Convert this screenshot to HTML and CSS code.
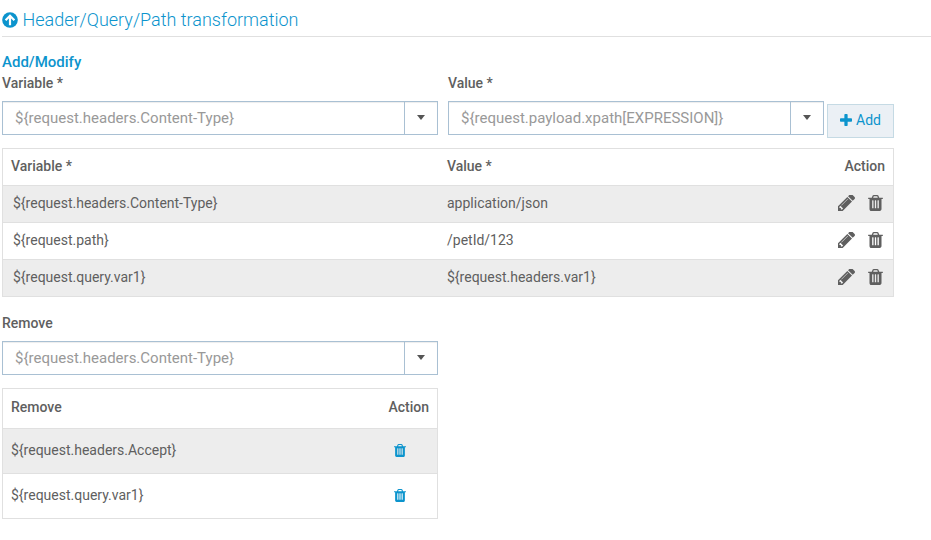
FILE: index.html
```html
<!DOCTYPE html>
<html lang="en">
<head>
<meta charset="utf-8">
<title>Header/Query/Path transformation</title>
<link rel="stylesheet" href="styles.css">
</head>
<body>
<svg class="defs" aria-hidden="true">
  <symbol id="pencil" viewBox="128 256 1515 1408"><path d="M491 1536l91-91-235-235-91 91v107h128v128h107zm523-928q0-22-22-22-10 0-17 7l-542 542q-7 7-7 17 0 22 22 22 10 0 17-7l542-542q7-7 7-17zm-54-192l416 416-832 832h-416v-416zm683 96q0 53-37 90l-166 166-416-416 166-165q36-38 90-38 53 0 91 38l235 234q37 39 37 91z"/></symbol>
  <symbol id="trash" viewBox="192 128 1408 1536"><path d="M704 1376v-704q0-14-9-23t-23-9h-64q-14 0-23 9t-9 23v704q0 14 9 23t23 9h64q14 0 23-9t9-23zm256 0v-704q0-14-9-23t-23-9h-64q-14 0-23 9t-9 23v704q0 14 9 23t23 9h64q14 0 23-9t9-23zm256 0v-704q0-14-9-23t-23-9h-64q-14 0-23 9t-9 23v704q0 14 9 23t23 9h64q14 0 23-9t9-23zm-544-992h448l-48-117q-7-9-17-11h-317q-10 2-17 11zm928 32v64q0 14-9 23t-23 9h-96v948q0 83-47 143.5t-113 60.5h-832q-66 0-113-58.5t-47-141.5v-952h-96q-14 0-23-9t-9-23v-64q0-14 9-23t23-9h309l70-167q15-37 54-63t79-26h320q40 0 79 26t54 63l70 167h309q14 0 23 9t9 23z"/></symbol>
</svg>
<h1 class="title">
  <svg class="title-icon" viewBox="0 0 16 16"><circle cx="8" cy="8" r="7.8"/><path class="arrow" d="M8 13.2V4M3.6 8.2L8 3.8l4.4 4.4"/></svg>
  <span>Header/Query/Path transformation</span>
</h1>
<h2 class="subtitle">Add/Modify</h2>
<div class="form-row">
  <div class="field field-variable">
    <label class="label">Variable *</label>
    <div class="combo"><span class="combo-text">${request.headers.Content-Type}</span><span class="combo-btn"><i class="caret"></i></span></div>
  </div>
  <div class="field field-value">
    <label class="label">Value *</label>
    <div class="combo"><span class="combo-text">${request.payload.xpath[EXPRESSION]}</span><span class="combo-btn"><i class="caret"></i></span></div>
  </div>
  <button class="add"><svg class="plus" viewBox="192 128 1408 1408"><path d="M1600 736v192q0 40-28 68t-68 28h-416v416q0 40-28 68t-68 28h-192q-40 0-68-28t-28-68v-416h-416q-40 0-68-28t-28-68v-192q0-40 28-68t68-28h416v-416q0-40 28-68t68-28h192q40 0 68 28t28 68v416h416q40 0 68 28t28 68z"/></svg><span>Add</span></button>
</div>
<div class="table mapping">
  <div class="row head"><span>Variable *</span><span>Value *</span><span class="action">Action</span></div>
  <div class="row odd"><span class="name">${request.headers.Content-Type}</span><span>application/json</span><span class="icons"><svg class="pencil"><use href="#pencil"/></svg><svg class="trash"><use href="#trash"/></svg></span></div>
  <div class="row"><span class="name">${request.path}</span><span>/petId/123</span><span class="icons"><svg class="pencil"><use href="#pencil"/></svg><svg class="trash"><use href="#trash"/></svg></span></div>
  <div class="row odd"><span class="name">${request.query.var1}</span><span>${request.headers.var1}</span><span class="icons"><svg class="pencil"><use href="#pencil"/></svg><svg class="trash"><use href="#trash"/></svg></span></div>
</div>
<div class="remove">
  <label class="label">Remove</label>
  <div class="combo"><span class="combo-text">${request.headers.Content-Type}</span><span class="combo-btn"><i class="caret"></i></span></div>
  <div class="table removal">
    <div class="row head"><span>Remove</span><span class="action">Action</span></div>
    <div class="row odd"><span>${request.headers.Accept}</span><svg class="trash-sm"><use href="#trash"/></svg></div>
    <div class="row"><span>${request.query.var1}</span><svg class="trash-sm"><use href="#trash"/></svg></div>
  </div>
</div>
</body>
</html>
```

FILE: styles.css
```css
* { box-sizing: border-box; }
body {
  margin: 0;
  padding-left: 2px;
  background: #fff;
  color: #5f5f5f;
  font: 14px/20px Roboto, sans-serif;
}
svg { fill: currentColor; flex: none; }
.defs { position: absolute; width: 0; height: 0; }
.title {
  display: flex;
  align-items: center;
  gap: 4.5px;
  height: 37px;
  margin: 0;
  padding-top: 3px;
  border-bottom: 1px solid #e0e0e0;
  color: #0c94cd;
  font-size: 18px;
  font-weight: 300;
}
.title-icon { width: 16px; height: 16px; }
.arrow { fill: none; stroke: #fff; stroke-width: 2.2; }
.subtitle {
  margin: 15px 0 0;
  color: #0c94cd;
  font-size: 15px;
  font-weight: 500;
  line-height: 20px;
}
.form-row { display: flex; align-items: flex-end; height: 66px; }
.field { padding-bottom: 3px; }
.field-variable { width: 436px; margin-right: 10px; }
.field-value { width: 376px; margin-right: 3px; }
.label { display: block; height: 28px; font-weight: 500; line-height: 20px; }
.combo { display: flex; height: 34px; border: 1px solid #a9c0d3; box-shadow: inset 0 1px 1px rgba(0, 0, 0, 0.075); }
.combo-text { flex: 1; padding-left: 12px; color: #999; font-size: 15px; line-height: 32px; }
.combo-btn { display: flex; align-items: center; justify-content: center; width: 33px; padding-bottom: 1px; border-left: 1px solid #a9c0d3; }
.caret { border: 4.5px solid transparent; border-top: 5px solid #555; border-bottom: 0; }
.add {
  display: flex;
  align-items: center;
  gap: 4px;
  width: 67px;
  height: 34px;
  padding: 0 0 2px 12px;
  border: 1px solid #c5dae4;
  background: #ebf0f5;
  color: #0c94cd;
  font: 14px Roboto, sans-serif;
}
.plus { width: 12px; height: 12px; }
.table { border: 1px solid #e0e0e0; }
.row { display: grid; align-items: center; border-bottom: 1px solid #e0e0e0; }
.row:last-child { border-bottom: 0; }
.head { font-weight: 500; }
.odd { background: #ededed; }
.mapping { width: 892px; margin-top: 10px; }
.mapping .row { grid-template-columns: 436px 1fr auto; height: 37px; padding: 0 8px 2px; }
.mapping .row:last-child { height: 36px; }
.name { padding-left: 2px; }
.icons { display: flex; align-items: center; gap: 13px; padding-right: 2px; }
.pencil { width: 17px; height: 16px; }
.trash { width: 15px; height: 16px; }
.remove { width: 436px; padding-top: 16px; }
.removal { margin-top: 13px; }
.removal .row { grid-template-columns: 1fr auto; height: 45px; padding: 0 8px 2px; }
.removal .head { height: 40px; padding-bottom: 3px; }
.removal .row:last-child { height: 44px; }
.trash-sm { width: 12px; height: 13px; margin: 1px 23px 0 0; color: #0c94cd; }
```
